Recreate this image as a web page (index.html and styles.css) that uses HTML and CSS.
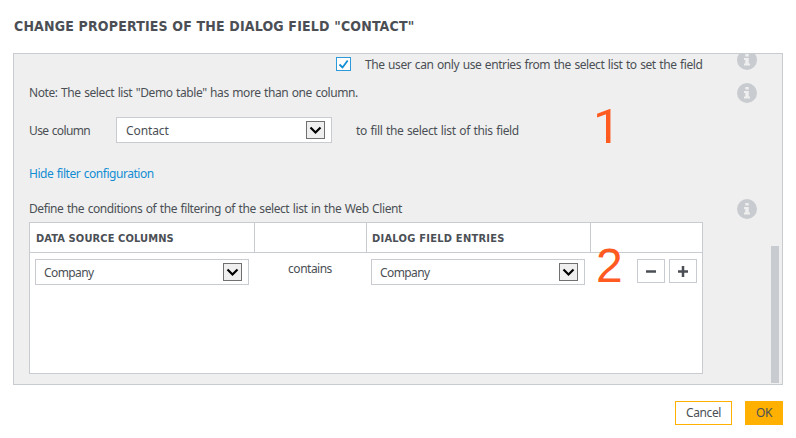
FILE: index.html
```html
<!DOCTYPE html>
<html lang="en">

<head>
  <meta charset="UTF-8">
  <meta name="viewport" content="width=device-width, initial-scale=1.0">
  <title>Change properties</title>
  <link rel="stylesheet" href="styles.css">
</head>

<body>
  <svg class="defs">
    <symbol id="info" viewBox="0 0 20 20">
      <circle cx="10" cy="10" r="10" fill="#c8cbcf" />
      <path d="M8.300 4h3.400v2.600H8.300zM7 8h4.700v5.600H13V15.600H7v-2h1.300V10H7z" fill="#efefef" />
    </symbol>
    <symbol id="arrow" viewBox="0 0 19 18">
      <path d="M4.500 6.500l5 5 5-5" fill="none" stroke="#000" stroke-width="2.200" />
    </symbol>
  </svg>

  <div class="dialog">
    <h1 class="title">CHANGE PROPERTIES OF THE DIALOG FIELD "CONTACT"</h1>

    <div class="panel">
      <div class="row row-check">
        <span class="checkbox"><svg viewBox="0 0 13 12"><path d="M2.500 6.500l3 3 5.200-7" fill="none" stroke="#118dd3" stroke-width="1.800" /></svg></span>
        <span>The user can only use entries from the select list to set the field</span>
        <svg class="info"><use href="#info" /></svg>
      </div>
      <div class="row row-note">
        <span>Note: The select list "Demo table" has more than one column.</span>
        <svg class="info"><use href="#info" /></svg>
      </div>
      <div class="row row-column">
        <span class="column-label">Use column</span>
        <div class="select"><span class="contact">Contact</span><i class="drop"><svg><use href="#arrow" /></svg></i></div>
        <span class="fill-text">to fill the select list of this field</span>
      </div>
      <div class="row row-link"><a class="link">Hide filter configuration</a></div>
      <div class="row row-define">
        <span>Define the conditions of the filtering of the select list in the Web Client</span>
        <svg class="info"><use href="#info" /></svg>
      </div>

      <div class="table">
        <div class="line head">
          <div class="cell">DATA SOURCE COLUMNS</div>
          <div class="cell"></div>
          <div class="cell">DIALOG FIELD ENTRIES</div>
          <div class="cell"></div>
        </div>
        <div class="line body">
          <div class="select"><span class="company">Company</span><i class="drop"><svg><use href="#arrow" /></svg></i></div>
          <div class="contains">contains</div>
          <div class="select"><span class="company">Company</span><i class="drop"><svg><use href="#arrow" /></svg></i></div>
          <div class="tools">
            <button class="tool"><svg viewBox="0 0 12 12"><path d="M1 6.500h10" stroke="#4b4f55" stroke-width="2.500" /></svg></button>
            <button class="tool"><svg viewBox="0 0 12 12"><path d="M1 6.500h10M6 1v11" stroke="#4b4f55" stroke-width="2.500" /></svg></button>
          </div>
        </div>
      </div>

      <div class="scroll"></div>
      <div class="mark mark1">1</div>
      <div class="mark mark2">2</div>
    </div>

    <div class="footer">
      <button class="btn cancel">Cancel</button>
      <button class="btn ok">OK</button>
    </div>
  </div>
</body>

</html>
```

FILE: styles.css
```css
* {
  box-sizing: border-box;
}

body {
  margin: 0;
  background-color: #fff;
  color: #4b4f55;
  font-family: 'Noto Sans', 'Open Sans', sans-serif;
  font-size: 12px;
  line-height: 16px;
  letter-spacing: -0.42px;
  word-spacing: 0.8px;
  white-space: nowrap;
}

svg {
  display: block;
}

.defs {
  display: none;
}

.dialog {
  padding: 0 13px;
}

.title {
  margin: 0;
  height: 53px;
  padding: 17px 0 0 1px;
  font-family: 'DejaVu Sans Condensed', 'DejaVu Sans', sans-serif;
  font-size: 14px;
  line-height: 18px;
  font-weight: bold;
  letter-spacing: 0.17px;
  word-spacing: 0;
}

.panel {
  position: relative;
  height: 332px;
  padding-left: 15px;
  border: 1px solid #c8cbcf;
  background-color: #efefef;
  overflow: hidden;
}

.row {
  display: flex;
  align-items: center;
  padding-right: 25px;
}

.row-check {
  height: 21px;
  padding-left: 307px;
}

.row-check .info {
  margin-top: -9px;
}

.row-note {
  height: 36px;
}

.row-column {
  height: 38px;
}

.row-link {
  height: 46px;
  padding-top: 3px;
}

.row-define {
  height: 27px;
}

.info {
  width: 20px;
  height: 20px;
  margin-left: auto;
  flex: none;
}

.checkbox {
  width: 15px;
  height: 14px;
  margin-top: -2px;
  margin-right: 14px;
  border: 1px solid #2d9bd9;
  background-color: #fff;
}

.column-label {
  width: 87px;
  padding-top: 2px;
  letter-spacing: -0.63px;
}

.select {
  display: flex;
  align-items: center;
  justify-content: space-between;
  width: 216px;
  height: 26px;
  padding: 0 6px 0 9px;
  border: 1px solid #c8cbcf;
  background-color: #fff;
}

.select span {
  padding-top: 2px;
}

.contact {
  letter-spacing: -0.1px;
}

.company {
  letter-spacing: -0.6px;
}

.drop {
  width: 19px;
  height: 18px;
  border: 1px solid #707070;
  background-color: #efefef;
}

.drop svg {
  width: 19px;
  height: 18px;
  margin: -1px;
}

.fill-text {
  margin-left: 24px;
  padding-top: 2px;
  letter-spacing: -0.36px;
}

.link {
  color: #118dd3;
  letter-spacing: -0.47px;
}

.table {
  width: 674px;
  height: 152px;
  border: 1px solid #c8cbcf;
  background-color: #fff;
}

.line {
  display: grid;
  grid-template-columns: 225px 112px 224px 111px;
}

.head {
  height: 30px;
  border-bottom: 1px solid #c8cbcf;
  font-family: 'DejaVu Sans Condensed', 'DejaVu Sans', sans-serif;
  font-size: 11px;
  font-weight: bold;
  letter-spacing: 0.12px;
  word-spacing: 0;
}

.cell {
  display: flex;
  align-items: center;
  padding: 2px 0 0 6px;
  border-right: 1px solid #c8cbcf;
}

.cell:nth-child(3) {
  padding-left: 5px;
  letter-spacing: 0.25px;
}

.cell:last-child {
  border-right: none;
}

.body {
  padding-top: 6px;
}

.body .select {
  width: 214px;
  margin-left: 5px;
  padding-left: 8px;
}

.body .select:nth-child(3) {
  margin-left: 4px;
}

.contains {
  padding: 2px 2px 0 0;
  text-align: center;
  letter-spacing: -0.5px;
}

.tools {
  display: flex;
  justify-content: flex-end;
  gap: 4px;
  padding-right: 5px;
}

.tool {
  display: flex;
  align-items: center;
  justify-content: center;
  width: 28px;
  height: 24px;
  padding: 0;
  border: 1px solid #c8cbcf;
  background-color: #fff;
}

.tool svg {
  width: 12px;
  height: 12px;
}

.scroll {
  position: absolute;
  right: 3px;
  bottom: 1px;
  width: 8px;
  height: 137px;
  background-color: #c8cbcf;
}

.mark {
  position: absolute;
  color: #ff5a1f;
  font-family: 'Liberation Sans', Arial, sans-serif;
  font-size: 48px;
  line-height: 48px;
  letter-spacing: 0;
}

.mark1 {
  left: 579px;
  top: 49px;
  font-family: Roboto, sans-serif;
  font-size: 49px;
}

.mark2 {
  left: 582px;
  top: 188px;
}

.footer {
  display: flex;
  justify-content: flex-end;
  gap: 13px;
  padding-top: 16px;
}

.btn {
  height: 24px;
  padding: 0;
  border: 1px solid #ffb000;
  background-color: #fff;
  color: inherit;
  font: inherit;
  letter-spacing: -0.4px;
}

.cancel {
  width: 57px;
}

.ok {
  width: 38px;
  background-color: #ffb000;
}
```
